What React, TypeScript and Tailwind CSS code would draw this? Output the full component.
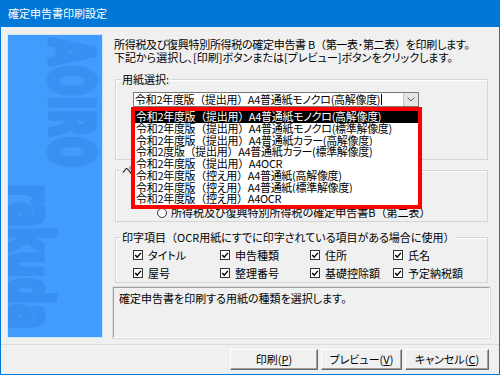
import React from "react";

const items = [
  "令和2年度版（提出用）A4普通紙モノクロ(高解像度)",
  "令和2年度版（提出用）A4普通紙モノクロ(標準解像度)",
  "令和2年度版（提出用）A4普通紙カラー(高解像度)",
  "令和2度版（提出用）A4普通紙カラー(標準解像度)",
  "令和2年度版（提出用）A4OCR",
  "令和2年度版（控え用）A4普通紙(高解像度)",
  "令和2年度版（控え用）A4普通紙(標準解像度)",
  "令和2年度版（控え用）A4OCR",
];

const checks = [
  ["タイトル", "申告種類", "住所", "氏名"],
  ["屋号", "整理番号", "基礎控除額", "予定納税額"],
];

// full-width parens keep their full width, the rest stays proportional
function J({ t }: { t: string }) {
  const parts = t.split(/([（）])/);
  return (
    <>
      {parts.map((p, i) =>
        p === "（" || p === "）" ? (
          <span key={i} className="[font-feature-settings:normal]">
            {p}
          </span>
        ) : (
          <React.Fragment key={i}>{p}</React.Fragment>
        )
      )}
    </>
  );
}

function CheckBox() {
  return (
    <svg width="10" height="10" viewBox="0 0 10 10" className="shrink-0">
      <rect x="0.5" y="0.5" width="9" height="9" fill="#fff" stroke="#333" />
      <path d="M2.2 5 L4.2 7.1 L7.9 2.9" fill="none" stroke="#000" strokeWidth="1.4" />
    </svg>
  );
}

function Radio() {
  return (
    <svg width="10" height="10" viewBox="0 0 10 10" className="shrink-0">
      <circle cx="5" cy="5" r="4.5" fill="#fff" stroke="#333" />
    </svg>
  );
}

function Group({ label, className, children }: { label: string; className: string; children?: React.ReactNode }) {
  return (
    <div className={"relative border border-[#d5d5d5] shadow-[inset_1px_1px_0_#ffffff] " + className}>
      <span className="absolute -top-[7px] left-[5px] bg-[#f0f0f0] px-[1px] leading-[13px] whitespace-nowrap">
        <J t={label} />
      </span>
      {children}
    </div>
  );
}

function Button({ w, children }: { w: string; children: React.ReactNode }) {
  return (
    <div
      className={
        "h-[21px] flex items-center justify-center bg-[#f0f0f0] border border-t-white border-l-white border-r-[#696969] border-b-[#696969] shadow-[inset_-1px_-1px_0_#a0a0a0] " +
        w
      }
    >
      {children}
    </div>
  );
}

export default function App() {
  return (
    <div className="w-[500px] h-[375px] bg-[#0078d7] flex flex-col px-[1px] pb-[1px] font-['Noto_Sans_CJK_JP','Noto_Sans',sans-serif] [font-feature-settings:'palt'] text-[11px] text-black">
      <div className="h-[27px] flex items-center pl-[7px] text-white [font-feature-settings:normal]">確定申告書印刷設定</div>
      <div className="flex-1 bg-[#f0f0f0] flex flex-col">
        <div className="flex pt-[7px] pl-[6px]">
          {/* logo panel */}
          <div className="w-[96px] h-[304px] bg-[#429cfd] border border-[#cfe6ff] overflow-hidden">
            <svg width="94" height="302" className="block">
              <text
                transform="translate(42,3) rotate(90)"
                fontFamily="DejaVu Sans"
                fontWeight="bold"
                fontSize="60"
                fill="#3890f2"
                stroke="#3890f2"
                strokeWidth="5"
                strokeLinejoin="round"
                textLength="129"
                lengthAdjust="spacingAndGlyphs"
              >
                AOIRO
              </text>
              <text
                transform="translate(1,149) rotate(90)"
                fontFamily="DejaVu Sans"
                fontWeight="bold"
                fontSize="61"
                fill="#3890f2"
                stroke="#3890f2"
                strokeWidth="5"
                strokeLinejoin="round"
                textLength="145"
                lengthAdjust="spacingAndGlyphs"
              >
                rakuda
              </text>
            </svg>
          </div>

          <div className="ml-[10px] w-[377px] flex flex-col">
            <p className="pl-[1px] pt-[3.5px] leading-[13px] whitespace-nowrap">
              <span className="tracking-[-0.3px]">
                <J t="所得税及び復興特別所得税の確定申告書 B（第一表･第二表）を印刷します。" />
              </span>
              <br />
              下記から選択し、[印刷]ボタンまたは[プレビュー]ボタンをクリックします。
            </p>

            <Group label="用紙選択:" className="mt-[15.5px] ml-[2px] w-[373px] h-[81px] z-10">
              <div className="mt-[12px] ml-[17px] w-[286px] h-[15px] bg-white border border-[#7a7a7a] flex items-center">
                <span className="pl-[1px] leading-[13px] whitespace-nowrap tracking-[-0.3px]">
                  <J t={items[0]} />
                </span>
                <span className="ml-[1px] w-px h-[11px] bg-black" />
                <div className="ml-auto w-[15px] h-full bg-[#e5e5e5] border-l border-[#c5c5c5] flex items-center justify-center">
                  <svg width="8" height="5" viewBox="0 0 8 5">
                    <path d="M0.5 0.5 L4 4 L7.5 0.5" fill="none" stroke="#606060" strokeWidth="1" />
                  </svg>
                </div>
              </div>
              {/* open dropdown list, outlined in red */}
              <div className="absolute left-[15px] top-[27px] w-[291px] h-[102px] border-4 border-[#ff0000] bg-white">
                {items.map((t, i) => (
                  <div
                    key={i}
                    className={
                      "h-[11.75px] leading-[11.75px] pl-[1px] whitespace-nowrap overflow-hidden tracking-[-0.3px] " +
                      (i === 0 ? "bg-black text-white" : "")
                    }
                  >
                    <J t={t} />
                  </div>
                ))}
              </div>
            </Group>

            <Group label="ページ選択:" className="mt-[10px] ml-[2px] w-[373px] h-[52px]">
              <div className="mt-[35px] ml-[41px] flex items-center gap-[4px] h-[13px] whitespace-nowrap">
                <Radio />
                <span>
                  <J t="所得税及び復興特別所得税の確定申告書B（第二表）" />
                </span>
              </div>
            </Group>

            <Group label="印字項目（OCR用紙にすでに印字されている項目がある場合に使用）" className="mt-[15px] ml-[2px] w-[373px] h-[46px]">
              <div className="pt-[9px] pl-[17px] flex flex-col gap-[4px]">
                {checks.map((row, r) => (
                  <div key={r} className="grid grid-cols-[87px_90px_83px_80px] h-[14px]">
                    {row.map((c) => (
                      <div key={c} className="flex items-center gap-[5px] whitespace-nowrap">
                        <CheckBox />
                        <span>{c}</span>
                      </div>
                    ))}
                  </div>
                ))}
              </div>
            </Group>

            <div className="mt-[4px] h-[51px] border border-t-[#a0a0a0] border-l-[#a0a0a0] border-r-white border-b-white shadow-[0_0_0_1px_#dcdcdc] pl-[5px] pt-[3.5px] leading-[13px]">
              確定申告書を印刷する用紙の種類を選択します。
            </div>
          </div>
        </div>

        <div className="mt-[6px] h-px bg-[#dcdcdc]" />

        <div className="mt-[4px] pr-[10px] flex justify-end gap-[3px]">
          <Button w="w-[88px]">
            印刷(<span className="underline">P</span>)
          </Button>
          <Button w="w-[81px]">
            プレビュー(<span className="underline">V</span>)
          </Button>
          <Button w="w-[84px]">
            キャンセル(<span className="underline">C</span>)
          </Button>
        </div>
      </div>
    </div>
  );
}
